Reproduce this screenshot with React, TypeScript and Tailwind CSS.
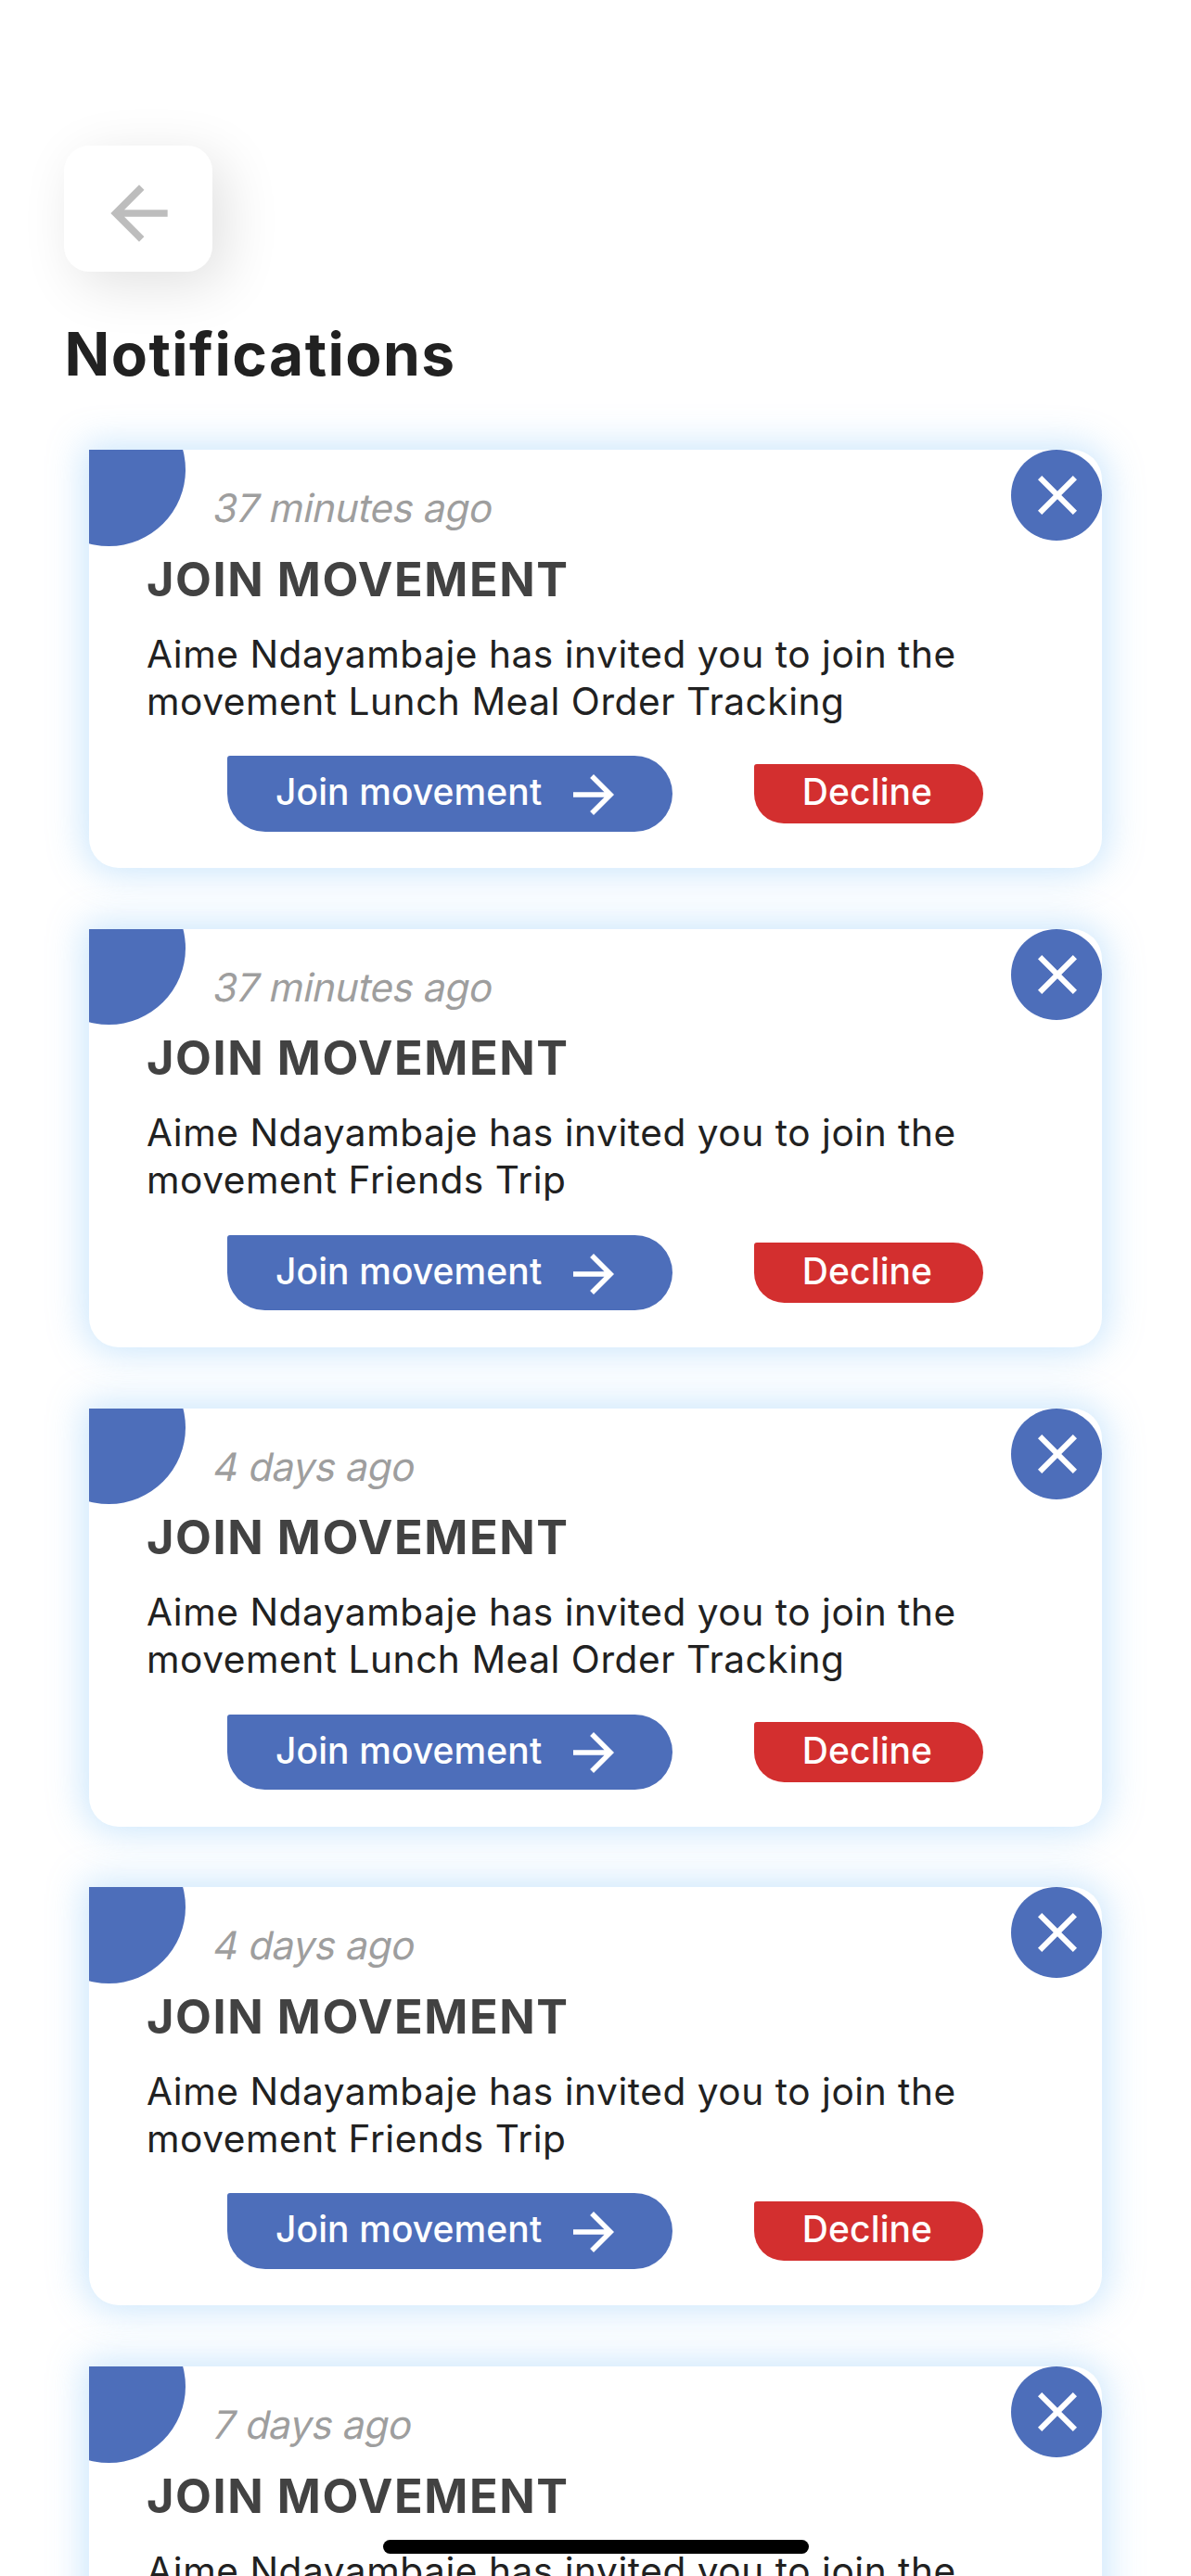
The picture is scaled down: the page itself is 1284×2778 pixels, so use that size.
import React from "react";

const notifications = [
  { time: "37 minutes ago", movement: "Lunch Meal Order Tracking" },
  { time: "37 minutes ago", movement: "Friends Trip" },
  { time: "4 days ago", movement: "Lunch Meal Order Tracking" },
  { time: "4 days ago", movement: "Friends Trip" },
  { time: "7 days ago", movement: "Lunch Meal Order Tracking" },
];

function Icon({ d, className }: { d: string; className: string }) {
  return (
    <svg viewBox="0 0 24 24" fill="currentColor" className={className} aria-hidden="true">
      <path d={d} />
    </svg>
  );
}

const BACK = "M20 11H7.83l5.59-5.59L12 4l-8 8 8 8 1.41-1.41L7.83 13H20v-2z";
const FORWARD = "M12 4l-1.41 1.41L16.17 11H4v2h12.17l-5.58 5.59L12 20l8-8z";
const CLOSE =
  "M19 6.41L17.59 5 12 10.59 6.41 5 5 6.41 10.59 12 5 17.59 6.41 19 12 13.41 17.59 19 19 17.59 13.41 12z";

function NotificationCard({ time, movement }: { time: string; movement: string }) {
  return (
    <article className="relative h-[451px] w-[1092px] shrink-0 rounded-[32px] rounded-tl-none bg-white pl-[62px] pt-[38px] shadow-[0_0_38px_6px_rgba(187,222,251,0.76)]">
      <div className="absolute left-0 top-0 h-[104px] w-[104px] overflow-hidden">
        <div className="-ml-[61.5px] -mt-[61.5px] h-[165px] w-[165px] rounded-full bg-[#4d6eba]" />
      </div>
      <button
        aria-label="Dismiss"
        className="absolute right-0 top-0 flex h-[98px] w-[98px] items-center justify-center rounded-full bg-[#4d6eba] pl-[2px] text-white"
      >
        <Icon d={CLOSE} className="h-[72px] w-[72px]" />
      </button>
      <p className="ml-[72.5px] w-max -skew-x-12 text-[42px] leading-[50px] tracking-[-0.25px] text-[#9e9e9e]">{time}</p>
      <h2 className="mt-[21.6px] whitespace-nowrap text-[50.5px] font-bold leading-[60px] tracking-[1.55px] text-[#424242]">
        JOIN MOVEMENT
      </h2>
      <p className="mt-[25px] whitespace-nowrap text-[40.6px] leading-[51px] tracking-[0.55px] text-[#212121]">
        Aime Ndayambaje has invited you to join the
        <br />
        movement {movement}
      </p>
      <div className="ml-[87px] mt-[33.6px] flex items-center gap-[88px] text-[39px] font-medium text-white">
        <button className="flex h-[81.5px] w-[480px] items-center rounded-[41px] rounded-tl-[3px] bg-[#4d6eba] pl-[52px]">
          <span className="w-[309.5px] whitespace-nowrap pb-[3px] text-left tracking-[0.1px]">Join movement</span>
          <Icon d={FORWARD} className="mt-[2px] h-[66px] w-[66px] shrink-0" />
        </button>
        <button className="flex h-[64.5px] w-[247px] items-center justify-center rounded-[33px] rounded-tl-[3px] bg-[#d32f2f] pb-[3px] pr-[3px] tracking-[0.1px]">
          Decline
        </button>
      </div>
    </article>
  );
}

export default function App() {
  return (
    <main className="relative h-[2778px] w-[1284px] overflow-hidden bg-white font-['Inter',sans-serif]">
      <header className="pl-[68.5px] pt-[157px]">
        <button
          aria-label="Back"
          className="flex h-[136px] w-[160px] items-center justify-center rounded-[27px] bg-white pl-[2px] pt-[10px] text-[#bdbdbd] shadow-[14px_14px_60px_rgba(0,0,0,0.12)]"
        >
          <Icon d={BACK} className="h-[92px] w-[92px]" />
        </button>
        <h1 className="ml-px mt-[49px] text-[64px] font-[650] leading-[80px] tracking-[1.45px] text-[#212121]">
          Notifications
        </h1>
      </header>
      <section className="mt-[63px] flex flex-col gap-[65.75px] pl-[96px]">
        {notifications.map((n, i) => (
          <NotificationCard key={i} {...n} />
        ))}
      </section>
      <div className="absolute bottom-[24px] left-[413px] h-[15px] w-[459px] rounded-full bg-black" />
    </main>
  );
}
